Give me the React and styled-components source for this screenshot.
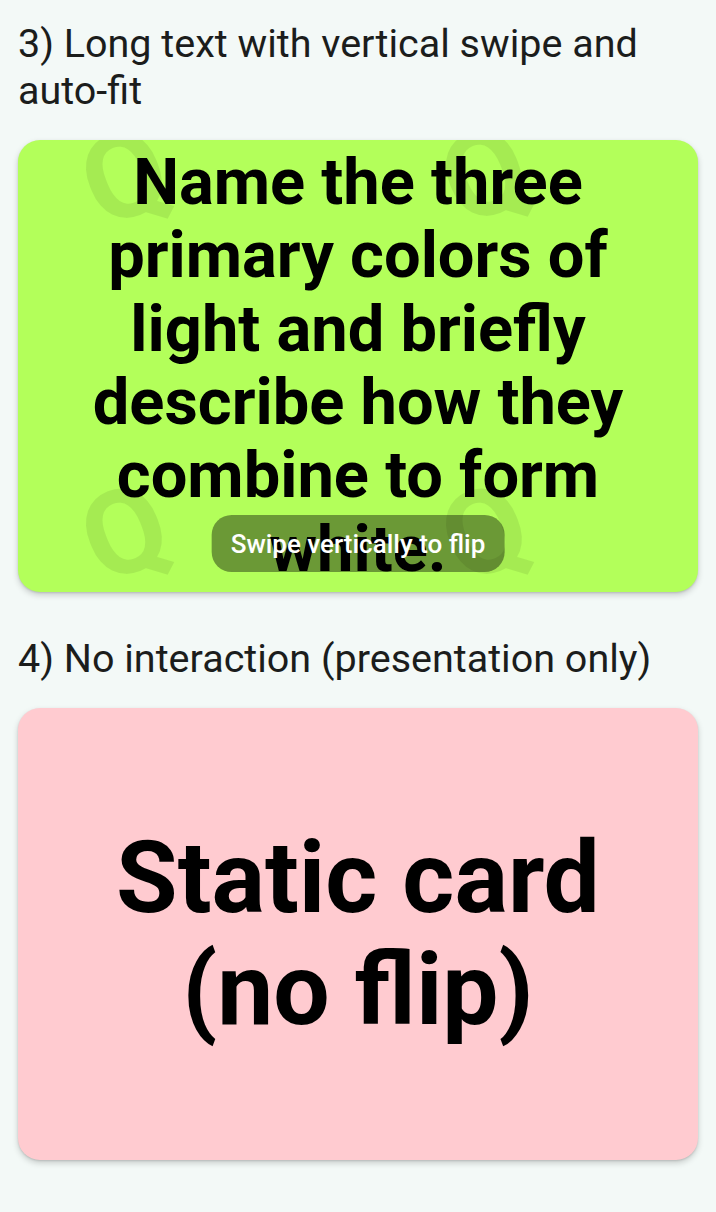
import React from "react";
import styled, { createGlobalStyle } from "styled-components";

const Global = createGlobalStyle`
  html, body { margin: 0; padding: 0; background: #f3f9f7; }
  body { font-family: Roboto, "Noto Sans", Arial, sans-serif; }
`;

const Page = styled.main`
  padding: 20px 18px 40px;
  display: flex;
  flex-direction: column;
`;

const Section = styled.section`
  display: flex;
  flex-direction: column;
  gap: ${(p) => p.$gap}px;
  margin-top: ${(p) => p.$top}px;
`;

const Title = styled.h2`
  margin: 0;
  font-family: Roboto, sans-serif;
  font-weight: 400;
  font-size: 39.5px;
  line-height: 47px;
  color: #1b1d1c;
`;

const Card = styled.div`
  position: relative;
  height: 452px;
  border-radius: 22px;
  background: ${(p) => p.$bg};
  box-shadow: 0 3px 6px rgba(0, 0, 0, 0.18), 0 1px 2px rgba(0, 0, 0, 0.12);
  overflow: hidden;
  display: flex;
  align-items: center;
  justify-content: center;
  padding: 0 ${(p) => p.$pad}px;
`;

const CardText = styled.div`
  position: relative;
  font-family: Roboto, sans-serif;
  font-weight: 700;
  font-size: ${(p) => p.$size}px;
  line-height: ${(p) => p.$lh}px;
  color: #000;
  text-align: center;
`;

const Watermark = styled.span`
  position: absolute;
  left: ${(p) => p.$x}px;
  top: ${(p) => p.$y}px;
  font-family: Roboto, sans-serif;
  font-weight: 700;
  font-size: 118px;
  line-height: 1;
  color: rgba(0, 0, 0, 0.08);
  transform: rotate(-22deg);
  pointer-events: none;
`;

const Badge = styled.div`
  position: absolute;
  left: 50%;
  bottom: 20px;
  transform: translateX(-50%);
  height: 57px;
  padding: 0 19px;
  display: flex;
  align-items: center;
  border-radius: 20px;
  background: rgba(0, 0, 0, 0.4);
  color: #fff;
  font-family: Roboto, sans-serif;
  font-weight: 500;
  font-size: 26px;
  white-space: nowrap;
`;

const marks = [
  { x: 66, y: -22 },
  { x: 426, y: -24 },
  { x: 66, y: 334 },
  { x: 426, y: 334 },
];

export default function App() {
  return (
    <>
      <Global />
      <Page>
        <Section $gap={26} $top={0}>
          <Title>3) Long text with vertical swipe and auto-fit</Title>
          <Card $bg="#b3ff5a" $pad={60}>
            {marks.map((m, i) => (
              <Watermark key={i} $x={m.x} $y={m.y}>Q</Watermark>
            ))}
            <CardText $size={65} $lh={73.4}>
              Name the three primary colors of light and briefly describe how
              they combine to form white.
            </CardText>
            <Badge>Swipe vertically to flip</Badge>
          </Card>
        </Section>
        <Section $gap={26} $top={43}>
          <Title>4) No interaction (presentation only)</Title>
          <Card $bg="#ffcbd0" $pad={40}>
            <CardText $size={100} $lh={112}>
              Static card (no flip)
            </CardText>
          </Card>
        </Section>
      </Page>
    </>
  );
}
